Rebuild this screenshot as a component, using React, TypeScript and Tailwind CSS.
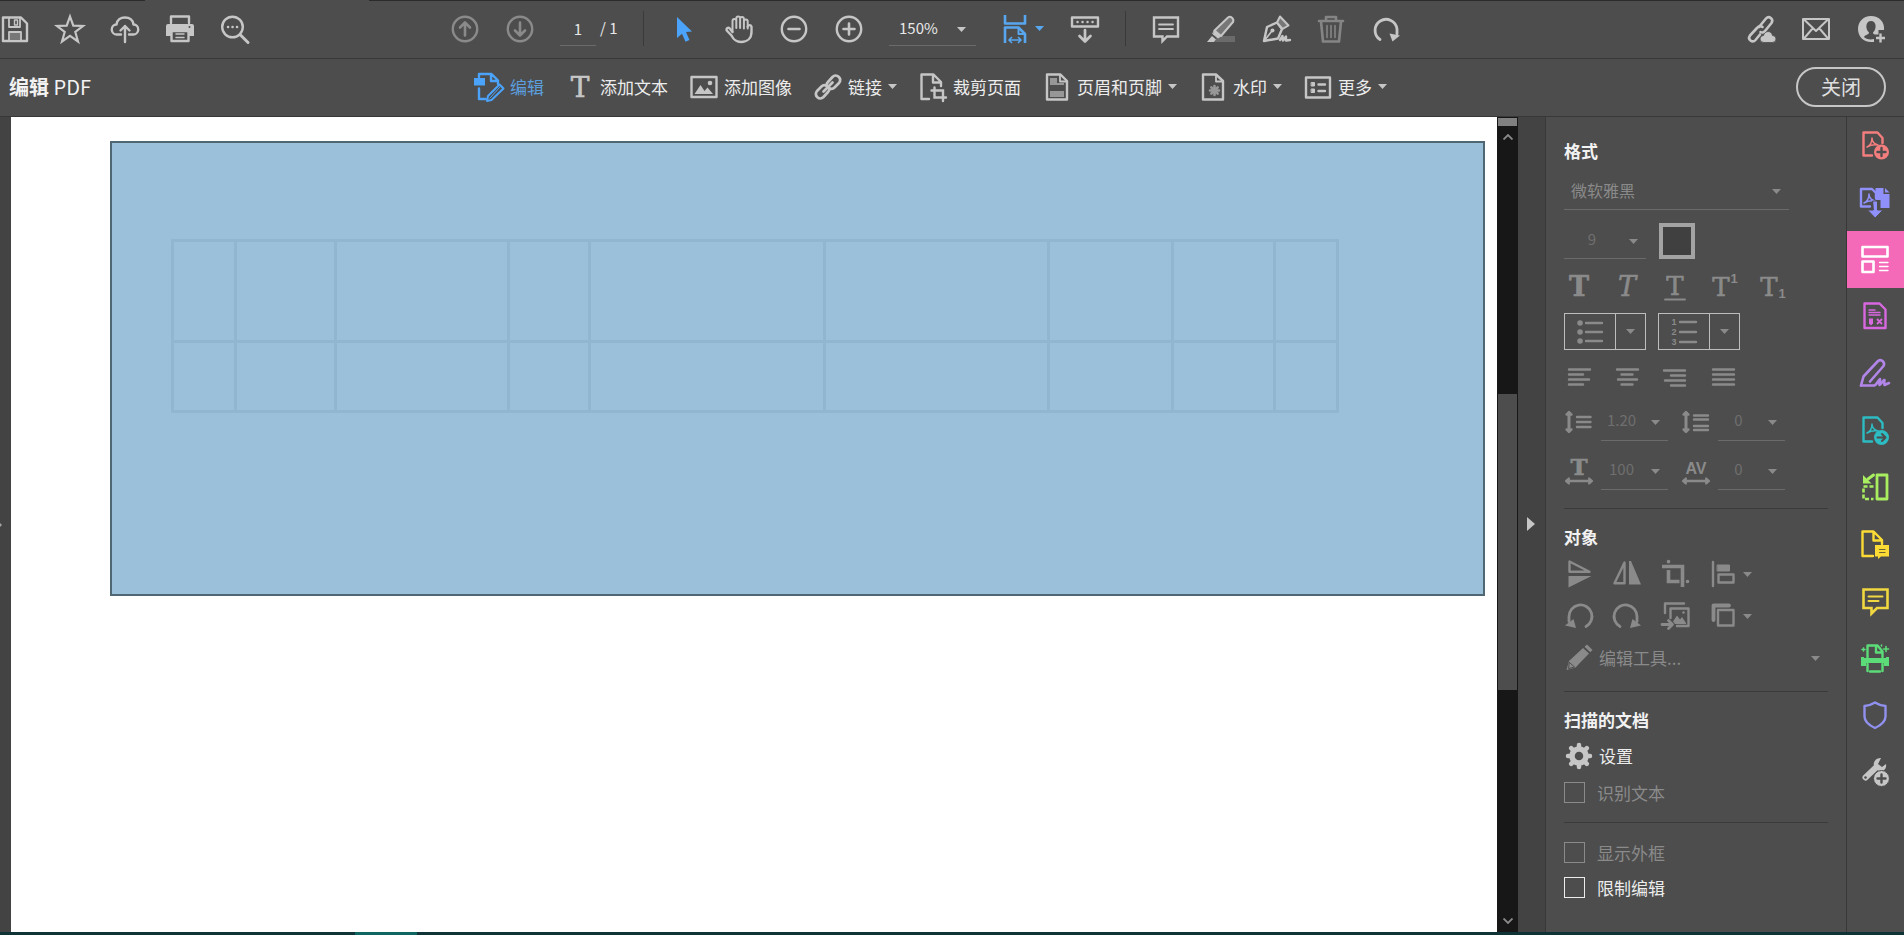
import { useState } from "react";
import type { ReactNode } from "react";

type IconProps = { children: ReactNode; className?: string };

// every icon is drawn on the same 28px grid
function Icon({ children, className = "" }: IconProps) {
  return (
    <svg
      viewBox="0 0 28 28"
      fill="none"
      stroke="currentColor"
      strokeWidth="2.4"
      strokeLinecap="round"
      strokeLinejoin="round"
      aria-hidden="true"
      className={`h-7 w-7 shrink-0 overflow-visible ${className}`}
    >
      {children}
    </svg>
  );
}

function Caret({ className = "" }: { className?: string }) {
  return (
    <svg
      viewBox="0 0 9 5"
      aria-hidden="true"
      className={`h-[5px] w-[9px] shrink-0 fill-current ${className}`}
    >
      <path d="M0 0h9L4.5 5z" />
    </svg>
  );
}

type IconButtonProps = {
  label: string;
  children: ReactNode;
  className?: string;
  disabled?: boolean;
};

function IconButton({ label, children, className = "", disabled }: IconButtonProps) {
  return (
    <button
      type="button"
      aria-label={label}
      disabled={disabled}
      className={`flex h-7 w-7 shrink-0 items-center justify-center ${className}`}
    >
      <Icon>{children}</Icon>
    </button>
  );
}

/* ---------- shared drawings ---------- */

const acrobatMark = (
  <path
    d="M9 18c3-1.500 5-5 5-9 0 4 2 6 6 7-4-.5-8 .2-11 2z"
    strokeWidth="1.500"
  />
);

const glyph = {
  stroke: "currentColor",
  strokeWidth: 0.6,
  fill: "currentColor",
  fontFamily: '"DejaVu Serif", serif',
  textAnchor: "middle" as const,
};

const smallGlyph = {
  stroke: "none",
  fill: "currentColor",
  fontFamily: '"Liberation Sans", sans-serif',
  fontWeight: "bold",
  textAnchor: "middle" as const,
};

/* ---------- top toolbar ---------- */

function MainToolbar() {
  const [page, setPage] = useState("1");

  return (
    <div className="flex h-[58px] items-center border-b border-[#383838] pr-[19px] pb-0.5 pl-px text-[#c6c6c6]">
      <div className="flex gap-[27px]">
        <IconButton label="保存">
          <path d="M2 2.500h18l6 6V26H2z" />
          <path d="M8 3v9h11V3M8 26v-9h12v9" strokeWidth="1.800" />
          <path d="M13.500 5h3v5h-3z" strokeWidth="1.400" />
          <path d="M9 18h10v7H9z" fill="#777" stroke="none" />
        </IconButton>
        <IconButton label="收藏">
          <path
            d="M14 1.500l3.300 9.200 9.700.3-7.700 6 2.700 9.500-8-5.600-8 5.600L8.700 17 1 11l9.700-.3z"
            strokeLinejoin="miter"
            strokeWidth="2.200"
          />
        </IconButton>
        <IconButton label="上传">
          <path d="M10 19.500H6a5 5 0 01-.5-10C6 5 9.500 2.500 14 2.500S22 5 22.500 9.500a5 5 0 01-.5 10h-4" />
          <path d="M14 27V11M9.500 15.500L14 11l4.500 4.500" />
        </IconButton>
        <IconButton label="打印">
          <path d="M5 8V1.500h18V8" />
          <path d="M2 9h24a2 2 0 012 2v10h-5v-5H5v5H0V11a2 2 0 012-2z" fill="currentColor" stroke="none" />
          <path d="M5.500 16v10h17V16z" />
          <path d="M10 19h8M10 22.500h8" strokeWidth="1.500" />
          <circle cx="23.500" cy="12" r="1" fill="#4d4d4d" stroke="none" />
        </IconButton>
        <IconButton label="搜索">
          <circle cx="11.500" cy="12" r="10.300" />
          <path d="M19 19.500l8 8" strokeWidth="3" />
          <path d="M7 12h.1M11.500 12h.1M16 12h.1" strokeWidth="2.500" />
        </IconButton>
      </div>

      <div className="ml-[202px] flex gap-[27px] text-[#8a8a8a]">
        <IconButton label="上一页" disabled>
          <circle cx="14" cy="14" r="12.200" />
          <path d="M14 20.500V8M9 12.500L14 7.500l5 5" strokeWidth="2.600" />
        </IconButton>
        <IconButton label="下一页" disabled>
          <circle cx="14" cy="14" r="12.200" />
          <path d="M14 7.500V20M9 15.500l5 5 5-5" strokeWidth="2.600" />
        </IconButton>
      </div>
      <input
        type="text"
        aria-label="页码"
        value={page}
        onChange={(e) => setPage(e.target.value)}
        className="ml-[26px] h-[35px] w-9 border-b border-[#6b6b6b] text-center text-[15px] text-[#e8e8e8] outline-none"
      />
      <span className="ml-1 w-5 text-[15px] whitespace-nowrap text-[#e8e8e8]">/ 1</span>

      <span className="ml-[23px] h-[35px] w-px bg-[#3a3a3a]" />

      <div className="ml-[26px] flex gap-[27px]">
        <IconButton label="选择" className="text-[#4ba3fa]">
          <path d="M7 2l15 14.500-6 .5 3.500 8-4 1.700-3.500-8L7 23z" fill="currentColor" stroke="none" />
        </IconButton>
        <IconButton label="手形工具">
          <path
            d="M7.500 16.500V6a1.900 1.900 0 013.800 0v7M11.300 13V3.500a1.900 1.900 0 013.800 0V13M15.100 13V4a1.900 1.900 0 013.800 0v9.500M18.900 13.500V6.500a1.900 1.900 0 013.800 0v7"
            strokeWidth="2"
          />
          <path d="M22.700 11.500a2 2 0 013.800 0V17c0 6-4 10-10.500 10-5.500 0-7.500-2.500-9.500-6.500L1.700 15.500c-.7-3 2.300-3.500 3.500-1.500l2.300 3" />
        </IconButton>
        <IconButton label="缩小">
          <circle cx="14" cy="14" r="12.200" />
          <path d="M8.500 14h11" strokeWidth="2.600" />
        </IconButton>
        <IconButton label="放大">
          <circle cx="14" cy="14" r="12.200" />
          <path d="M8.500 14h11M14 8.500v11" strokeWidth="2.600" />
        </IconButton>
      </div>
      <div className="relative ml-[26px]">
        <select
          aria-label="缩放"
          className="h-[35px] w-[87px] appearance-none border-b border-[#6b6b6b] pl-2.5 text-[15px] text-[#e8e8e8] outline-none"
        >
          <option>150%</option>
        </select>
        <Caret className="pointer-events-none absolute top-4 right-2.5" />
      </div>
      <button type="button" aria-label="适合宽度" className="ml-[25px] flex items-center gap-1.5 text-[#58a6ee]">
        <Icon>
          <path d="M4 0v8.500h20V0M4 28V12.500h13.500L24 19v9" strokeLinecap="butt" strokeWidth="2.600" />
          <path d="M17.500 13v6H24" strokeWidth="2" />
          <path d="M8 25h12M10.500 22.500L8 25l2.500 2.500M17.500 22.500L20 25l-2.500 2.500" strokeWidth="1.700" />
        </Icon>
        <Caret />
      </button>
      <IconButton label="阅读模式" className="ml-[27px]">
        <path d="M1 2.500h26v9H1z" />
        <path d="M6.500 7h.1M11.500 7h.1M16.500 7h.1M21.500 7h.1" />
        <path d="M14 15v11M8.500 21l5.500 5.500 5.500-5.500" strokeWidth="2.700" />
      </IconButton>

      <span className="ml-[26px] h-[35px] w-px bg-[#3a3a3a]" />

      <div className="ml-[26px] flex gap-[27px]">
        <IconButton label="添加附注">
          <path d="M2 2.500h24v19H15L10.500 26v-4.500H2z" strokeLinejoin="miter" />
          <path d="M7 9.500h14M7 14h14" strokeWidth="1.800" />
        </IconButton>
        <IconButton label="高亮文本">
          <path d="M10 21h18v6H8z" fill="#6b6b6b" stroke="none" />
          <path d="M7.500 15.500L21 2.500c2.500-2 6.500 1 5 4.500L14 21z" fill="#777" strokeWidth="2" />
          <path d="M7.500 15.500L14 21l-3 2-5-4z" fill="currentColor" strokeWidth="1" />
          <path d="M5 21l4 3.500-2 2.500H0z" fill="currentColor" stroke="none" />
        </IconButton>
        <IconButton label="签名">
          <path d="M2 26l3-14 10-4.500 5 6.500-4 9.500z" />
          <path d="M15 7.500l3-6 8.500 9-6 3.500z" fill="#777" strokeWidth="2" />
          <path d="M2.500 25.500l7-9" strokeWidth="1.600" />
          <circle cx="10.500" cy="15.500" r="2" fill="currentColor" stroke="none" />
          <path d="M18 25l2.500-4 .5 4.500 3-4v4l4-.5" />
        </IconButton>
        <IconButton label="删除" disabled className="text-[#858585]">
          <path d="M2 6h24M9 5.500V2h10v3.500M4 6.500L6 26.500h16l2-20" strokeWidth="2.600" />
          <path d="M10 10.500v12M14 10.500v12M18 10.500v12" strokeWidth="1.600" />
        </IconButton>
        <IconButton label="旋转">
          <path d="M8 24.500A11 11 0 1125 14v5" strokeWidth="2.800" />
          <path d="M17.500 18.500l10.500 2-7.500 6z" fill="currentColor" stroke="none" />
        </IconButton>
      </div>

      <div className="ml-auto flex gap-[27px]">
        <IconButton label="共享链接">
          <path d="M12 12l7-8.500c3-3.500 8 .5 5.500 4.500L18 16c-1 1.500-3 2-4.500 1" strokeWidth="2.600" />
          <path d="M15.500 12c-2-1.500-4-1-5.500 1L3 20.500c-3 4 2.500 8 5.500 4.500L13 19.500" strokeWidth="2.600" />
          <path d="M16.500 27.500a3.500 3.500 0 010-7c1-5 8-5.500 9 0a3.500 3.500 0 010 7z" fill="currentColor" stroke="#4d4d4d" strokeWidth=".8" />
        </IconButton>
        <IconButton label="邮件">
          <path d="M1 4h26v20H1zM2 4.500L14 16 26 4.500M2 23.500l8.500-10M26 23.500l-8.500-10" strokeWidth="2" />
        </IconButton>
        <IconButton label="账户">
          <path
            d="M14 1C6 1 1 7 1 14s5 13 13 13h3v-3c-4 1-8.500 0-10-2 1-2.500 5-2 5-4.500C8 14 8.500 6 14 6s6 8 2 11.500c0 1 .5 1.500 1.500 2h4V15H27C28 7 22 1 14 1z"
            fill="currentColor"
            stroke="none"
          />
          <path d="M23.500 18.500v9M19 23h9" strokeLinecap="butt" />
        </IconButton>
      </div>
    </div>
  );
}

/* ---------- edit toolbar ---------- */

type Tool = { label: string; icon: ReactNode; menu?: boolean; active?: boolean };

const tools: Tool[] = [
  {
    label: "编辑",
    active: true,
    icon: (
      <>
        <path d="M3 4V1h12.500L22 7.500V11M15 1.500V8h6.500" />
        <path d="M-2 5H9v7.500H-2z" fill="currentColor" stroke="none" />
        <path d="M3 15.500V26h6.500" />
        <path d="M23.500 11.500l4 4L15.500 27l-4.500 1 1-5z" strokeWidth="2" />
        <path d="M24.500 13.500L14 25" strokeWidth="1" />
      </>
    ),
  },
  {
    label: "添加文本",
    icon: (
      <text x="14" y="24" fontSize="28" {...glyph}>
        T
      </text>
    ),
  },
  {
    label: "添加图像",
    icon: (
      <>
        <path d="M1.500 4h25v20h-25z" />
        <path d="M4.500 21l6-9 4 6 3-3.500 5.500 6.500z" fill="currentColor" stroke="none" />
        <circle cx="20" cy="10" r="2.300" fill="currentColor" stroke="none" />
      </>
    ),
  },
  {
    label: "链接",
    menu: true,
    icon: (
      <>
        <path d="M13 13.500c-.8-1.500-.5-3 1-4.500l4.500-5c4-4 10 1.500 6.500 6L20.500 14.500c-1.500 1.500-3 1.700-4.500 1" strokeWidth="2.700" />
        <path d="M15 14.500c.8 1.500.5 3-1 4.500l-4.500 5c-4 4-10-1.500-6.500-6L7.500 13.500c1.500-1.500 3-1.700 4.500-1" strokeWidth="2.700" />
        <path d="M9.500 18.500l9-9" strokeWidth="2.700" />
      </>
    ),
  },
  {
    label: "裁剪页面",
    icon: (
      <>
        <path d="M10 26H2.500V1.500h12L22 9v4M14 2v7.500h7.500" />
        <path d="M12.500 17.500H24V28M15.500 14.500v10H27" strokeLinejoin="miter" />
      </>
    ),
  },
  {
    label: "页眉和页脚",
    menu: true,
    icon: (
      <>
        <path d="M4 1.500h13.500L24 8v18.500H4z" />
        <path d="M17 2v6.500h6.500" strokeWidth="1.800" />
        <path d="M7 5h7v5h7v2H7zM7 18h14v6H7z" fill="#979797" stroke="none" />
      </>
    ),
  },
  {
    label: "水印",
    menu: true,
    icon: (
      <>
        <path d="M4 1.500h13L24 8v18.500H4z" />
        <path d="M17 2v6.500h6.500" strokeWidth="1.800" />
        <path d="M15.500 13v9M11 17.500h9M12.300 14.300l6.400 6.400M18.700 14.300l-6.400 6.400" stroke="#979797" strokeWidth="2.600" />
      </>
    ),
  },
  {
    label: "更多",
    menu: true,
    icon: (
      <>
        <path d="M2 4.500h24v20H2z" />
        <path d="M7.500 9.500h3v3.500h-3zM7.500 16h3v3.500h-3z" fill="currentColor" strokeWidth="1" />
        <path d="M14.500 11.500H21M14.500 18H21" />
      </>
    ),
  },
];

function EditToolbar() {
  return (
    <div className="flex h-[58px] items-center border-b border-[#383838] pr-[18px] pb-0.5 text-[#c6c6c6]">
      <h1 className="w-[476px] pl-[9px] text-xl text-[#f2f2f2]">
        <span className="font-bold">编辑</span> PDF
      </h1>
      <div className="flex gap-[22px]">
        {tools.map((tool) => (
          <button
            key={tool.label}
            type="button"
            className={`flex items-center gap-1.5 ${tool.active ? "text-[#4ba3fa]" : ""}`}
          >
            <Icon>{tool.icon}</Icon>
            <span
              className={`text-[17px] leading-6 whitespace-nowrap ${tool.active ? "text-[#5b9fdf]" : "text-[#ececec]"}`}
            >
              {tool.label}
            </span>
            {tool.menu && <Caret />}
          </button>
        ))}
      </div>
      <button
        type="button"
        className="ml-auto h-10 w-[90px] rounded-full border-2 border-[#c6c6c6] text-xl leading-6 text-[#dedede]"
      >
        关闭
      </button>
    </div>
  );
}

/* ---------- document ---------- */

function DocumentView() {
  return (
    <main className="min-w-0 flex-1 overflow-hidden bg-white pt-6 pr-3 pl-[99px]">
      <div className="h-[455px] border-2 border-[#4f6773] bg-[#9ac0da] pt-24 pl-[59px]">
        <table className="w-[1167px] table-fixed border-collapse">
          <colgroup>
            <col className="w-[63px]" />
            <col className="w-[100px]" />
            <col className="w-[173px]" />
            <col className="w-[81px]" />
            <col className="w-[235px]" />
            <col className="w-[224px]" />
            <col className="w-[124px]" />
            <col className="w-[102px]" />
            <col className="w-[63px]" />
          </colgroup>
          <tbody>
            {["h-[101px]", "h-[70px]"].map((height) => (
              <tr key={height} className={height}>
                {Array.from({ length: 9 }, (_, i) => (
                  <td key={i} className="border-[3px] border-[#91b6d0] p-0" />
                ))}
              </tr>
            ))}
          </tbody>
        </table>
      </div>
    </main>
  );
}

function Scrollbar() {
  return (
    <div className="flex w-[21px] flex-col items-center bg-[#171717] pt-px text-[#8a8a8a]">
      <div className="h-2 w-[19px] bg-[#808080]" />
      <svg viewBox="0 0 10 6" className="mt-2 h-1.5 w-2.5" fill="none" stroke="currentColor" strokeWidth="1.800">
        <path d="M.5 5.500L5 1l4.500 4.500" />
      </svg>
      <div className="flex w-full flex-1 flex-col items-center">
        <div className="flex-[254]" />
        <div className="w-[19px] flex-[296] bg-[#4d4d4d]" />
        <div className="flex-[228]" />
      </div>
      <svg viewBox="0 0 10 6" className="mb-2 h-1.5 w-2.5" fill="none" stroke="currentColor" strokeWidth="1.800">
        <path d="M.5.5L5 5 9.500.5" />
      </svg>
    </div>
  );
}

/* ---------- format panel ---------- */

function ValueSelect({ label, value }: { label: string; value: string }) {
  return (
    <div className="relative w-[67px]">
      <select
        aria-label={label}
        disabled
        className="h-[38px] w-full appearance-none border-b border-[#6b6b6b] pr-[26px] pb-0.5 text-center text-[15px] text-[#6f6f6f] opacity-100"
      >
        <option>{value}</option>
      </select>
      <Caret className="absolute top-[17px] right-2" />
    </div>
  );
}

function ListButton({ label, children }: { label: string; children: ReactNode }) {
  return (
    <div className="flex h-[37px] w-[82px] border border-[#bdbdbd]">
      <button type="button" aria-label={label} disabled className="flex w-[51px] items-center justify-center border-r border-[#bdbdbd]">
        <Icon>{children}</Icon>
      </button>
      <button type="button" aria-label={`${label}选项`} disabled className="flex flex-1 items-center justify-center">
        <Caret />
      </button>
    </div>
  );
}

function Check({ label, disabled, className }: { label: string; disabled?: boolean; className: string }) {
  return (
    <label
      className={`flex h-[21px] items-center gap-3 text-[17px] leading-6 ${disabled ? "text-[#8a8a8a]" : "text-[#ececec]"} ${className}`}
    >
      <input
        type="checkbox"
        disabled={disabled}
        className="h-[21px] w-[21px] appearance-none border border-current checked:bg-[#4ba3fa]"
      />
      {label}
    </label>
  );
}

function FormatPanel() {
  return (
    <aside className="w-[301px] shrink-0 overflow-hidden border-l border-[#383838] px-[18px] pt-[22px] text-[#8a8a8a]">
      <h2 className="text-[17px] leading-6 font-bold text-[#f2f2f2]">格式</h2>
      <div className="relative mt-[9px] w-[225px]">
        <select
          aria-label="字体"
          disabled
          className="h-[38px] w-full appearance-none border-b border-[#6b6b6b] pb-0.5 pl-[7px] text-base opacity-100"
        >
          <option>微软雅黑</option>
        </select>
        <Caret className="absolute top-[17px] right-2" />
      </div>

      <div className="mt-[13px] flex gap-[13px]">
        <div className="relative w-[82px]">
          <select
            aria-label="字号"
            disabled
            className="h-9 w-full appearance-none border-b border-[#6b6b6b] pr-[26px] pb-0.5 text-center text-[15px] text-[#6f6f6f] opacity-100"
          >
            <option>9</option>
          </select>
          <Caret className="absolute top-4 right-2" />
        </div>
        <button type="button" aria-label="颜色" className="h-9 w-9 border-4 border-[#a3a3a3] bg-[#404040]" />
      </div>

      <div className="mt-3.5 flex gap-5 pl-px">
        <IconButton label="粗体" disabled>
          <text x="14" y="23" fontSize="27" fontWeight="bold" {...glyph}>T</text>
        </IconButton>
        <IconButton label="斜体" disabled>
          <text x="14" y="23" fontSize="27" fontStyle="italic" {...glyph}>T</text>
        </IconButton>
        <IconButton label="下划线" disabled>
          <text x="14" y="22" fontSize="26" {...glyph}>T</text>
          <path d="M4 26.500h20" strokeWidth="1.800" />
        </IconButton>
        <IconButton label="上标" disabled>
          <text x="12" y="23" fontSize="26" {...glyph}>T</text>
          <text x="25" y="10" fontSize="13" {...smallGlyph}>1</text>
        </IconButton>
        <IconButton label="下标" disabled>
          <text x="12" y="23" fontSize="26" {...glyph}>T</text>
          <text x="25" y="25" fontSize="13" {...smallGlyph}>1</text>
        </IconButton>
      </div>

      <div className="mt-3 flex gap-3">
        <ListButton label="项目符号">
          <path d="M10 5h16M10 14h16M10 23h16" />
          <path d="M4 5h.1M4 14h.1M4 23h.1" strokeWidth="5.500" />
        </ListButton>
        <ListButton label="编号">
          <path d="M10 4h16M10 14h16M10 24h16" />
          <text x="4" y="7" fontSize="9" {...smallGlyph}>1</text>
          <text x="4" y="17" fontSize="9" {...smallGlyph}>2</text>
          <text x="4" y="27" fontSize="9" {...smallGlyph}>3</text>
        </ListButton>
      </div>

      <div className="mt-[13px] flex gap-5 pl-px">
        <IconButton label="左对齐" disabled>
          <path d="M4 6.500h21M4 11.500h14M4 16.500h20M4 21.500h14" />
        </IconButton>
        <IconButton label="居中" disabled>
          <path d="M4 6.500h21M8.500 11.500h11M5 16.500h19M8.500 21.500h11" />
        </IconButton>
        <IconButton label="右对齐" disabled>
          <path d="M3 7.500h21M10 12.500h14M4 17.500h20M10 22.500h14" />
        </IconButton>
        <IconButton label="两端对齐" disabled>
          <path d="M4 6.500h21M4 11.500h21M4 16.500h21M4 21.500h21" />
        </IconButton>
      </div>

      <div className="mt-3 flex items-center gap-2 pl-px">
        <Icon>
          <path d="M4 5v18" strokeWidth="3" />
          <path d="M4 4L1.500 6.500h5zM4 24l-2.500-2.500h5z" fill="currentColor" />
          <path d="M12 9h13.500M12 14h13.500M12 19h13.500" />
        </Icon>
        <ValueSelect label="行间距" value="1.20" />
        <Icon className="ml-1.5">
          <path d="M4 5v18" strokeWidth="3" />
          <path d="M4 4L1.500 6.500h5zM4 24l-2.500-2.500h5z" fill="currentColor" />
          <path d="M12 7.500h14M12 11.500h14M12 18h14M12 22h14" />
        </Icon>
        <ValueSelect label="段落间距" value="0" />
      </div>
      <div className="mt-[11px] flex items-center gap-2 pl-px">
        <Icon>
          <text x="14" y="18" fontSize="23" fontWeight="bold" {...glyph}>T</text>
          <path d="M4 24h20" strokeWidth="2.600" />
          <path d="M.8 24L4 21.300v5.400zM27.200 24L24 21.300v5.400z" fill="currentColor" strokeWidth="1.800" />
        </Icon>
        <ValueSelect label="水平缩放" value="100" />
        <Icon className="ml-1.5">
          <text x="14" y="17" fontSize="16" {...smallGlyph}>AV</text>
          <path d="M4 24h20" strokeWidth="2.600" />
          <path d="M.8 24L4 21.300v5.400zM27.200 24L24 21.300v5.400z" fill="currentColor" strokeWidth="1.800" />
        </Icon>
        <ValueSelect label="字符间距" value="0" />
      </div>

      <hr className="mt-[18px] border-[#3a3a3a]" />
      <h2 className="mt-4 text-[17px] leading-6 font-bold text-[#f2f2f2]">对象</h2>
      <div className="mt-[11px] flex gap-5 pl-px">
        <IconButton label="垂直翻转" disabled>
          <path d="M4.500 1.500v10.300h20z" />
          <path d="M3.500 16h23L3.500 27.500z" fill="currentColor" stroke="none" />
        </IconButton>
        <IconButton label="水平翻转" disabled>
          <path d="M11.500 2.500v20.800H1.500z" />
          <path d="M16 1h2l10 23.500H16z" fill="currentColor" stroke="none" />
        </IconButton>
        <IconButton label="裁剪" disabled>
          <path d="M1 6.500h20.500V27M7.500 10v11.500h11" strokeWidth="3.600" strokeLinejoin="miter" strokeLinecap="butt" />
          <path d="M7.500 1.500v.3M26.500 21.500h.1" strokeWidth="3.600" />
        </IconButton>
        <button type="button" aria-label="对齐对象" disabled className="flex items-center gap-1.5">
          <Icon>
            <path d="M4 2v24" />
            <path d="M8.500 5h12v6h-12z" fill="currentColor" strokeWidth="1" />
            <path d="M9.500 14.500h15v8h-15z" />
          </Icon>
          <Caret />
        </button>
      </div>
      <div className="mt-3.5 flex gap-5 pl-px">
        <IconButton label="逆时针旋转" disabled>
          <path d="M21 24.500A11.500 11.500 0 104 14.500v5" strokeWidth="2.800" />
          <path d="M0 23.500l8.500-6.500 2.500 9z" fill="currentColor" stroke="none" />
        </IconButton>
        <IconButton label="顺时针旋转" disabled>
          <path d="M7 24.500A11.500 11.500 0 1124 14.500v5" strokeWidth="2.800" />
          <path d="M28 23.500L19.500 17 17 26z" fill="currentColor" stroke="none" />
        </IconButton>
        <IconButton label="替换图像" disabled>
          <path d="M4 11V1.500h19M16 24h11.500V6.500h-18V16" />
          <path d="M12 19.500l4-6 3 4 2-2.500 4 6v1H14z" fill="currentColor" stroke="none" />
          <circle cx="22.500" cy="10.500" r="1.300" fill="currentColor" stroke="none" />
          <path d="M1 22.500h9M7.500 18.500l4 4-4 4" strokeWidth="2.800" />
        </IconButton>
        <button type="button" aria-label="排列对象" disabled className="flex items-center gap-1.5">
          <Icon>
            <path d="M20 3.500H4.500V18" strokeWidth="3.800" />
            <path d="M9 8h15.500v15.500H9z" fill="#4d4d4d" />
          </Icon>
          <Caret />
        </button>
      </div>
      <button type="button" disabled className="mt-3.5 flex w-full items-center gap-1.5 pr-2 pl-px text-[17px] leading-6">
        <Icon>
          <path d="M4 17L18 4l6 5.500L10.500 23.500 1.500 26z" fill="currentColor" stroke="none" />
          <path d="M19.500 2.700L22 .5l5.500 5.500-2.200 2.300z" fill="currentColor" stroke="none" />
          <path d="M4.500 18.500l5 4.500-5.500 1.500z" stroke="#4d4d4d" strokeWidth="1" />
        </Icon>
        编辑工具...
        <Caret className="ml-auto" />
      </button>

      <hr className="mt-[19px] border-[#3a3a3a]" />
      <h2 className="mt-4 text-[17px] leading-6 font-bold text-[#f2f2f2]">扫描的文档</h2>
      <button type="button" className="mt-2.5 flex items-center gap-1.5 pl-px text-[17px] leading-6 text-[#ececec]">
        <Icon className="text-[#c6c6c6]">
          <circle cx="14" cy="14" r="7" strokeWidth="5.500" />
          <path
            d="M14 3v2M14 23v2M3 14h2M23 14h2M6.200 6.200l1.400 1.400M20.400 20.400l1.400 1.400M6.200 21.800l1.400-1.400M20.400 7.600l1.400-1.400"
            strokeWidth="4.500"
          />
        </Icon>
        设置
      </button>
      <Check label="识别文本" disabled className="mt-3" />

      <hr className="mt-[19px] border-[#3a3a3a]" />
      <Check label="显示外框" disabled className="mt-[19px]" />
      <Check label="限制编辑" className="mt-3.5" />
    </aside>
  );
}

/* ---------- right rail ---------- */

const railItems: { label: string; className: string; icon: ReactNode }[] = [
  {
    label: "创建 PDF",
    className: "text-[#f47e7e]",
    icon: (
      <>
        <path d="M11 24.500H2.500V1.500h14l5 5.500v5" />
        <g transform="translate(-3 -2)">{acrobatMark}</g>
        <circle cx="20.500" cy="21" r="7.500" fill="currentColor" stroke="none" />
        <path d="M20.500 17v8M16.500 21h8" stroke="#4d4d4d" />
      </>
    ),
  },
  {
    label: "合并文件",
    className: "text-[#9090fa]",
    icon: (
      <>
        <path d="M9 18.500H0V1h11l4 4v5" />
        <g transform="translate(-6 -3)">{acrobatMark}</g>
        <path d="M14.500 0h8v6h6v14h-9v-8h-5z" fill="currentColor" stroke="none" />
        <path d="M24 0l4.500 4.500H24z" fill="currentColor" stroke="none" />
        <path d="M12 13h4.500v9H22L14.200 30 6.500 22H12z" fill="currentColor" stroke="#4d4d4d" strokeWidth="1" />
      </>
    ),
  },
  {
    label: "编辑 PDF",
    className: "bg-[#f56ab8] text-white",
    icon: (
      <>
        <path d="M1.500 2h25v9.500h-25zM1.500 16.500h11V27h-11z" strokeWidth="2.600" />
        <path d="M18.500 17.500H27M18.500 21.500H27M18.500 25.500H27" strokeWidth="1.300" />
      </>
    ),
  },
  {
    label: "准备表单",
    className: "text-[#d868e0]",
    icon: (
      <>
        <path d="M3.500 1.500h15l6 6v18.500h-21z" />
        <path d="M8 8h6M8 10.500h11M8 13h11" strokeWidth="1.400" />
        <path d="M8 16.500h4v5l-2 2-2-2z" fill="currentColor" stroke="none" />
        <path d="M16.500 17.500l4 4M20.500 17.500l-4 4" strokeWidth="1.800" />
      </>
    ),
  },
  {
    label: "填写并签名",
    className: "text-[#b285e8]",
    icon: (
      <>
        <path d="M0 26.500l2.500-9L17 2c3.500-2.500 7.500 1.500 5.500 5L9 22.500" strokeWidth="2.600" />
        <path d="M0 26.500h13.500c2.500-1 4-5.500 5.500-6.500.5 2-1 4-.5 6 2-1 3-4 5-5-.5 2 0 4 0 5l4.500-2" strokeWidth="2.600" />
      </>
    ),
  },
  {
    label: "导出 PDF",
    className: "text-[#2cbcc2]",
    icon: (
      <>
        <path d="M11 25.500H2.500V1.500h14l5 5.500v5" />
        <g transform="translate(-3 -1)">{acrobatMark}</g>
        <circle cx="20.500" cy="21.500" r="7.500" fill="currentColor" stroke="none" />
        <path d="M16.500 21.500h7.500M21 18l3.500 3.500L21 25" stroke="#4d4d4d" strokeWidth="2" />
      </>
    ),
  },
  {
    label: "组织页面",
    className: "text-[#a8ee60]",
    icon: (
      <>
        <path d="M16 2h10v24H16z" strokeWidth="2.800" />
        <path d="M12.500 13.500h-10V26h10" strokeDasharray="4 2" strokeLinecap="butt" strokeWidth="2.600" />
        <path d="M12.500 2L7 6" strokeWidth="3" />
        <path d="M2 2v8.500h8.500z" fill="currentColor" stroke="none" />
      </>
    ),
  },
  {
    label: "发送以供注释",
    className: "text-[#fcdc34]",
    icon: (
      <>
        <path d="M12 26H1.500V1.500h11L21 10v4M12.500 2v8.500H21" />
        <path d="M14 15h14v11.500h-8L17 29v-2.500h-3z" fill="currentColor" stroke="none" />
        <path d="M18.500 19.500H24M18.500 22.500H24" stroke="#6b6430" strokeWidth="1.200" />
      </>
    ),
  },
  {
    label: "注释",
    className: "text-[#f2d840]",
    icon: (
      <>
        <path d="M2.500 2.500h24v18.500H16l-5.500 5.500V21h-8z" strokeWidth="2.600" strokeLinejoin="miter" />
        <path d="M7.500 9.500h14M7.500 14h10" strokeWidth="2" />
      </>
    ),
  },
  {
    label: "扫描和 OCR",
    className: "text-[#5cdc78]",
    icon: (
      <>
        <path d="M6.500 14V1.500h10l5 6V13M15 2v6.500h6" />
        <path d="M0 13h3v1h22v-1h3v9h-5v-3H5v3H0z" fill="currentColor" stroke="none" />
        <path d="M6.500 20v7M21.500 20v7M9 27.500h10" />
        <path d="M25 2.500v5M22.500 5h5M2.500 4v3M1 5.500h3M20.500 1v1" strokeWidth="1.600" />
      </>
    ),
  },
  {
    label: "保护",
    className: "text-[#9090ee]",
    icon: (
      <path
        d="M14 1.500c3 2 6.500 3 10.500 3.500v10.500c0 5.500-4 8.500-10.500 11.500C7.500 24 3.500 21 3.500 15.500V5C7.500 4.500 11 3.500 14 1.500z"
      />
    ),
  },
  {
    label: "更多工具",
    className: "text-[#c6c6c6]",
    icon: (
      <>
        <path d="M4.500 19.500L15 9.500" strokeWidth="6" />
        <path d="M20 0c-5-.5-9 5-6.500 9l4 4c4 1.500 8.500-2 7.500-7l-4 3-4-3z" fill="currentColor" stroke="none" />
        <circle cx="4.500" cy="19.500" r="1.300" fill="#4d4d4d" stroke="none" />
        <circle cx="20.500" cy="20.500" r="8" fill="currentColor" stroke="#4d4d4d" strokeWidth="1" />
        <path d="M20.500 16.500v8M16.500 20.500h8" stroke="#4d4d4d" />
      </>
    ),
  },
];

function ToolRail() {
  return (
    <nav className="flex w-[58px] shrink-0 flex-col border-l border-[#383838]">
      {railItems.map((item) => (
        <button
          key={item.label}
          type="button"
          aria-label={item.label}
          className={`flex h-[57px] items-center justify-center pr-0.5 pb-0.5 ${item.className}`}
        >
          <Icon>{item.icon}</Icon>
        </button>
      ))}
    </nav>
  );
}

export default function App() {
  return (
    <div className="flex h-screen flex-col overflow-hidden bg-[#4d4d4d] font-['Noto_Sans_CJK_SC',sans-serif]">
      <div className="flex h-px shrink-0">
        <span className="w-[145px] bg-[#2b2b2b]" />
        <span className="w-[224px]" />
        <span className="flex-1 bg-[#2b2b2b]" />
      </div>
      <MainToolbar />
      <EditToolbar />

      <div className="flex min-h-0 flex-1">
        <div className="flex w-[11px] shrink-0 items-center bg-[#434343]">
          <svg viewBox="0 0 2 4" className="h-1 w-0.5 fill-[#a3a3a3]">
            <path d="M0 0l2 2-2 2z" />
          </svg>
        </div>
        <DocumentView />
        <Scrollbar />
        {/* panel collapse handle */}
        <button type="button" aria-label="折叠面板" className="flex w-[27px] shrink-0 items-center justify-center bg-[#434343] pr-0.5 pb-0.5">
          <svg viewBox="0 0 8 14" className="h-3.5 w-2 fill-[#c6c6c6]">
            <path d="M0 0l8 7-8 7z" />
          </svg>
        </button>
        <FormatPanel />
        <ToolRail />
      </div>

      {/* sliver of the taskbar */}
      <div className="flex h-[3px] shrink-0 bg-[#103338]">
        <span className="ml-[355px] w-[62px] bg-[#0f6660]" />
      </div>
    </div>
  );
}
